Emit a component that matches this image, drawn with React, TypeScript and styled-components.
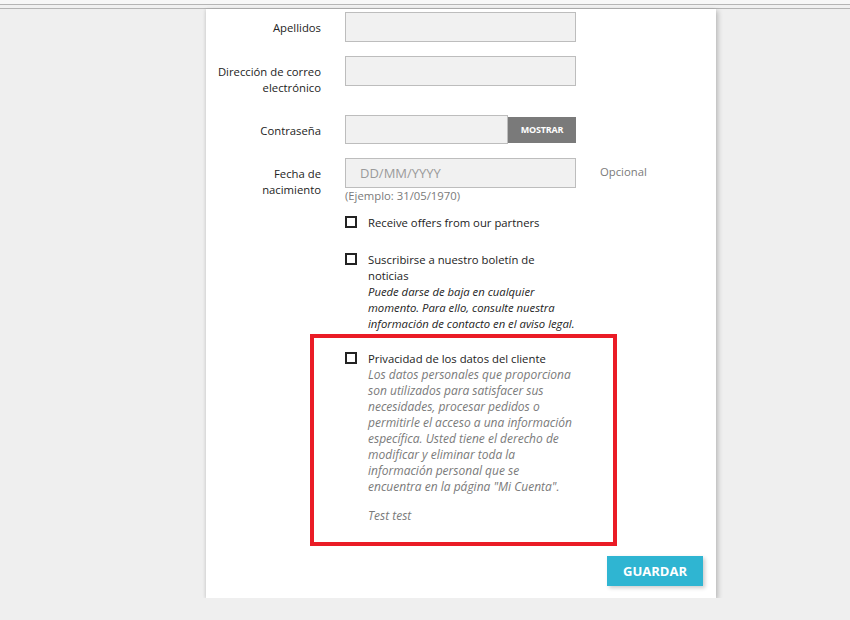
import React from "react";
import styled, { createGlobalStyle } from "styled-components";

const GlobalStyle = createGlobalStyle`
  html, body {
    margin: 0;
    padding: 0;
    background: #efefef;
  }
  body {
    font-family: "Open Sans", "Noto Sans", sans-serif;
    color: #232323;
  }
  * {
    box-sizing: border-box;
  }
`;

const TopBar = styled.div`
  height: 5px;
  background: #f7f7f7;
  border-bottom: 1px solid #b5b5b5;
`;

const SubBar = styled.div`
  height: 4px;
  background: #f1f1f1;
  border-bottom: 1px solid #b5b5b5;
`;

const Page = styled.div`
  padding-left: 206px;
`;

const Card = styled.div`
  width: 510px;
  background: #fff;
  box-shadow: 2px 2px 5px rgba(0, 0, 0, 0.22), -1px 0 3px rgba(0, 0, 0, 0.08);
  padding: 3px 13px 12px 0;
`;

const Row = styled.div<{ $gap?: number }>`
  display: grid;
  grid-template-columns: 139px 231px 1fr;
  margin-bottom: ${(p) => p.$gap ?? 14}px;
  font-size: 11.3px;
  line-height: 16px;
`;

const Label = styled.label`
  padding: 8px 24px 5px 8px;
  text-align: right;
  color: #232323;
`;

const Field = styled.div`
  display: flex;
  flex-direction: column;
`;

const Input = styled.input<{ $h?: number }>`
  height: ${(p) => p.$h ?? 30}px;
  width: 100%;
  background: #f1f1f1;
  border: 1px solid #bdbdbd;
  padding: 0 14px;
  font-family: "Open Sans", "Noto Sans", sans-serif;
  font-size: 13px;
  color: #7a7a7a;
  outline: none;
  &::placeholder {
    color: #9a9a9a;
  }
`;

const InputGroup = styled.div`
  display: flex;
  height: 29px;
  align-items: center;
`;

const ShowButton = styled.button`
  height: 26px;
  width: 68px;
  flex: none;
  background: #7a7a7a;
  color: #fff;
  border: none;
  font-family: "Open Sans", "Noto Sans", sans-serif;
  font-size: 9px;
  font-weight: 700;
  letter-spacing: -0.2px;
  padding: 0;
`;

const Hint = styled.span`
  color: #7a7a7a;
  font-size: 11.3px;
  line-height: 16px;
`;

const Comment = styled.div`
  padding: 6px 0 0 24px;
  color: #7a7a7a;
  font-size: 11.3px;
`;

const CheckRow = styled.div<{ $gap?: number }>`
  position: relative;
  margin-left: 139px;
  width: 231px;
  display: flex;
  gap: 11px;
  margin-bottom: ${(p) => p.$gap ?? 19}px;
  font-size: 11.3px;
  line-height: 16px;
`;

const Box = styled.span`
  flex: none;
  width: 12px;
  height: 12px;
  margin-top: 1px;
  border: 2px solid #232323;
  background: #fff;
`;

const CheckText = styled.div`
  flex: 1;
`;

const Note = styled.em<{ $muted?: boolean }>`
  display: block;
  font-style: italic;
  font-size: ${(p) => (p.$muted ? "12px" : "11.3px")};
  color: ${(p) => (p.$muted ? "#7a7a7a" : "#232323")};
  padding-right: ${(p) => (p.$muted ? 2 : 0)}px;
`;

const NoteGap = styled(Note)`
  margin-top: 13px;
`;

const Highlight = styled.div`
  position: absolute;
  left: -35px;
  top: -17px;
  right: -41px;
  bottom: -22px;
  border: 4px solid #ea1c26;
  pointer-events: none;
`;

const Footer = styled.div`
  display: flex;
  justify-content: flex-end;
  margin-top: 32px;
`;

const SaveButton = styled.button`
  height: 30px;
  width: 96px;
  background: #2fb5d2;
  color: #fff;
  border: none;
  font-family: "Open Sans", "Noto Sans", sans-serif;
  font-size: 13px;
  font-weight: 700;
  text-transform: uppercase;
  box-shadow: 2px 2px 4px rgba(0, 0, 0, 0.2);
  padding: 0;
`;

export default function App() {
  return (
    <>
      <GlobalStyle />
      <TopBar />
      <SubBar />
      <Page>
        <Card>
          <Row>
            <Label>Apellidos</Label>
            <Field>
              <Input type="text" />
            </Field>
          </Row>
          <Row>
            <Label>Dirección de correo electrónico</Label>
            <Field>
              <Input type="email" />
            </Field>
          </Row>
          <Row>
            <Label>Contraseña</Label>
            <Field>
              <InputGroup>
                <Input type="password" $h={29} />
                <ShowButton>MOSTRAR</ShowButton>
              </InputGroup>
            </Field>
          </Row>
          <Row $gap={11}>
            <Label>Fecha de nacimiento</Label>
            <Field>
              <Input type="text" placeholder="DD/MM/YYYY" />
              <Hint>(Ejemplo: 31/05/1970)</Hint>
            </Field>
            <Comment>Opcional</Comment>
          </Row>
          <CheckRow $gap={21}>
            <Box />
            <CheckText>Receive offers from our partners</CheckText>
          </CheckRow>
          <CheckRow>
            <Box />
            <CheckText>
              Suscribirse a nuestro boletín de noticias
              <Note>
                Puede darse de baja en cualquier momento. Para ello, consulte
                nuestra información de contacto en el aviso legal.
              </Note>
            </CheckText>
          </CheckRow>
          <CheckRow $gap={0}>
            <Box />
            <CheckText>
              Privacidad de los datos del cliente
              <Note $muted>
                Los datos personales que proporciona son utilizados para
                satisfacer sus necesidades, procesar pedidos o permitirle el
                acceso a una información específica. Usted tiene el derecho de
                modificar y eliminar toda la información personal que se
                encuentra en la página "Mi Cuenta".
              </Note>
              <NoteGap $muted>Test test</NoteGap>
            </CheckText>
            <Highlight />
          </CheckRow>
          <Footer>
            <SaveButton>Guardar</SaveButton>
          </Footer>
        </Card>
      </Page>
    </>
  );
}
